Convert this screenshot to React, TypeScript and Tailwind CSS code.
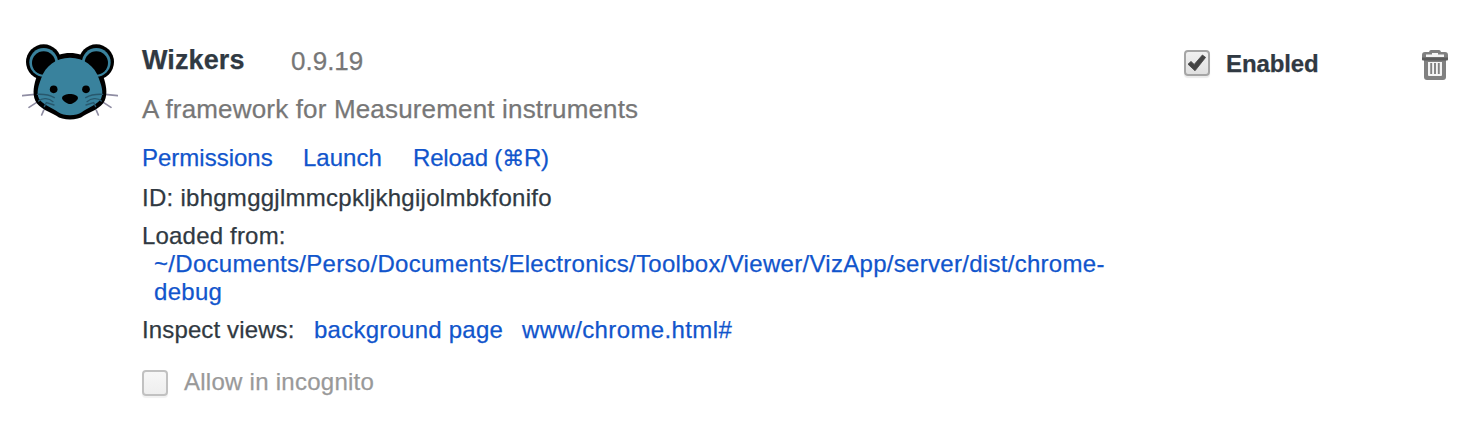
import type { ReactNode } from 'react';

function MouseLogo() {
  return (
    <svg viewBox="36 36 288 240" className="h-20 w-24 shrink-0" aria-hidden="true">
      <g stroke="#8f8da3" strokeWidth="5" strokeLinecap="round" fill="none">
        <path d="M37 197 L75 193 M57 232 L80 217 M95 255 L101 241" />
        <path d="M323 197 L285 193 M303 232 L280 217 M265 255 L259 241" />
      </g>
      <g fill="#000">
        <circle cx="101" cy="96" r="53" />
        <circle cx="259" cy="96" r="53" />
        <path d="M180 69 C226 69 266 98 280 140 C288 162 294 190 284 212 C273 235 242 245 221 257 C203 272 157 272 139 257 C118 245 87 235 76 212 C66 190 72 162 80 140 C94 98 134 69 180 69 Z" />
      </g>
      <g fill="#39829d">
        <circle cx="101" cy="97" r="43" />
        <circle cx="259" cy="97" r="43" />
      </g>
      <g fill="#000">
        <circle cx="101" cy="99" r="35" />
        <circle cx="259" cy="99" r="35" />
      </g>
      <path fill="#39829d" d="M180 83 C222 83 254 108 266 144 C274 166 282 187 273 206 C261 225 235 231 215 247 C200 259 160 259 145 247 C125 231 99 225 87 206 C78 187 86 166 94 144 C106 108 138 83 180 83 Z" />
      <circle cx="131" cy="178" r="11.5" />
      <circle cx="228" cy="178" r="11.5" />
      <path d="M156 203 C160 188 200 188 204 203 C204 212 188 222 180 222 C172 222 156 212 156 203 Z" />
      <g stroke="#28586d" strokeWidth="4" fill="none" strokeLinecap="round">
        <path d="M82 193 C105 192 121 196 133 203 M86 213 C98 202 117 205 129 215 M103 230 L109 218 L132 225" />
        <path d="M278 193 C255 192 239 196 227 203 M274 213 C262 202 243 205 231 215 M257 230 L251 218 L228 225" />
      </g>
    </svg>
  );
}

function TrashIcon() {
  return (
    <svg viewBox="0 0 28 32" className="h-8 w-7" aria-hidden="true">
      <path fill="#808080" d="M3 10 H25 V28 Q25 31 22 31 H6 Q3 31 3 28 Z" />
      <path fill="#f4f4f4" d="M7 13 H21 V26 Q21 27 20 27 H8 Q7 27 7 26 Z" />
      <path d="M10.2 14 V25 M14 14 V25 M17.8 14 V25" stroke="#808080" strokeWidth="1.9" />
      <path fill="#808080" d="M8 3 Q8.5 1 10 1 H18 Q19.5 1 20 3 H24 Q27 3 27 6 V10 H1 V6 Q1 3 4 3 Z" />
      <path fill="#f4f4f4" d="M11 4 H17 V5.5 H23 V8 H5 V5.5 H11 Z" />
      <path fill="#5c5c5c" d="M1 8.5 H27 V10.5 Q27 11.5 26 11.5 H2 Q1 11.5 1 10.5 Z" />
    </svg>
  );
}

function CheckBox({ checked = false }: { checked?: boolean }) {
  const tone = checked
    ? 'border-[#a5a5a5] from-[#f0f0f0] to-[#e0e0e0] shadow-[0_2px_1px_#ebebeb]'
    : 'border-[#c1c1c1] from-[#f7f7f7] to-[#eeeeee] shadow-[0_2px_1px_#f1f1f1]';
  return (
    <span role="checkbox" aria-checked={checked} className={`block size-[26px] shrink-0 rounded-[4px] border-2 bg-linear-to-b ${tone}`}>
      {checked && (
        <svg viewBox="0 0 22 22" className="size-[22px]" aria-hidden="true">
          <path d="M2 12.2 L5 9.4 L8.2 12.4 L16.4 3 L19.6 5.4 L9 18.8 Z" fill="#444" stroke="#444" strokeWidth=".8" strokeLinejoin="round" />
        </svg>
      )}
    </span>
  );
}

function Link({ children, className = '' }: { children: ReactNode; className?: string }) {
  return <a href="#" className={`text-[#1155cc] ${className}`}>{children}</a>;
}

export default function App() {
  return (
    <main className="flex h-[430px] w-[1482px] items-start bg-white pl-[22px] font-['Liberation_Sans',Arial,sans-serif] text-2xl leading-7 text-[#303942] [-webkit-text-stroke:0.25px_currentColor]">
      <div className="mt-[42px]"><MouseLogo /></div>
      <section className="ml-6 mt-[46px] w-[1042px] whitespace-nowrap">
        <div className="flex h-12 items-start text-[26px] leading-[30px]">
          <h1 className="-mt-px w-[149px] text-[27px] font-bold tracking-[0.1px]">Wizkers</h1>
          <span className="text-[#777777]">0.9.19</span>
        </div>
        <p className="h-[50px] text-[26px] leading-[30px] tracking-[0.165px] text-[#777777]">A framework for Measurement instruments</p>
        <nav className="flex h-10">
          <Link className="w-[161px]">Permissions</Link>
          <Link className="w-[110px]">Launch</Link>
          <Link className="tracking-[-0.2px]">Reload (<span className="font-['DejaVu_Sans',sans-serif] text-[22px] leading-none">⌘</span>R)</Link>
        </nav>
        <p className="h-[38px] tracking-[0.27px]">ID: ibhgmggjlmmcpkljkhgijolmbkfonifo</p>
        <p className="tracking-[0.19px]">Loaded from:</p>
        <p className="h-[66px] pl-3 tracking-[0.295px]"><Link>~/Documents/Perso/Documents/Electronics/Toolbox/Viewer/VizApp/server/dist/chrome-<br />debug</Link></p>
        <p className="flex h-[52px]">
          <span className="w-[172px] tracking-[0.13px]">Inspect views:</span>
          <Link className="w-[208px] tracking-[0.24px]">background page</Link>
          <Link className="tracking-[0.38px]">www/chrome.html#</Link>
        </p>
        <div className="flex text-[#999999]">
          <span className="mt-0.5 mr-4"><CheckBox /></span>
          <span className="tracking-[0.26px]">Allow in incognito</span>
        </div>
      </section>
      <label className="mt-[50px] flex w-[237px] font-bold tracking-[-0.1px]">
        <CheckBox checked />
        <span className="ml-4">Enabled</span>
      </label>
      <button className="mt-[49px]" aria-label="Remove"><TrashIcon /></button>
    </main>
  );
}
